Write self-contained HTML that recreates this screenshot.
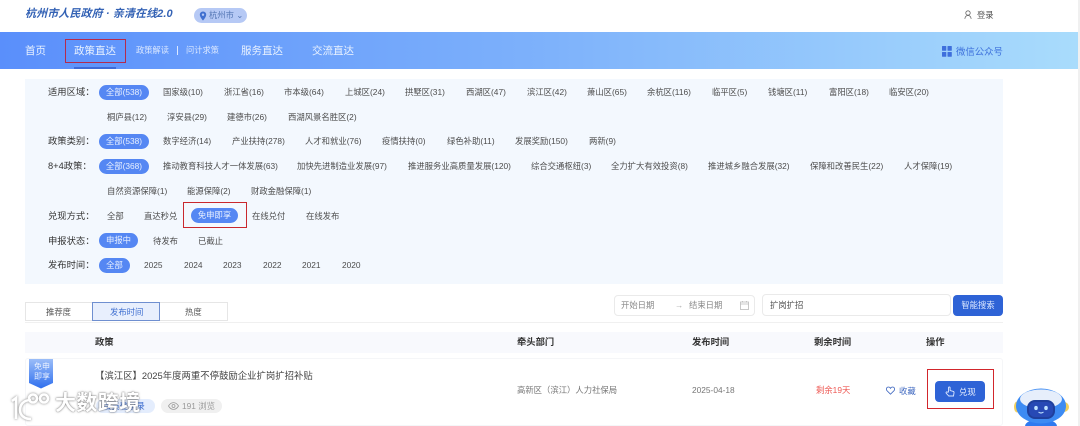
<!DOCTYPE html>
<html lang="zh"><head><meta charset="utf-8"><style>
html,body{margin:0;padding:0;width:1080px;height:426px;overflow:hidden;background:#fff}
body{position:relative;font-family:"Liberation Sans","Noto Sans CJK SC",sans-serif;color:#555}
#w{position:absolute;left:0;top:0;width:1080px;height:426px;overflow:hidden;filter:blur(.35px)}
.a{position:absolute;white-space:nowrap}
.t{position:absolute;white-space:nowrap;font-size:8.350px;line-height:14px;color:#4d4d4d}
.l{position:absolute;white-space:nowrap;font-size:9.300px;line-height:14px;color:#333;left:48px}
.p{position:absolute;white-space:nowrap;font-size:8.350px;line-height:15px;height:15px;background:#5587f3;color:#e8f0ff;border-radius:8px;text-align:center}
.n{position:absolute;white-space:nowrap;color:#e9f2ff;font-size:10.500px;line-height:16px;top:43px}
.h{position:absolute;white-space:nowrap;font-size:9.300px;line-height:14px;top:335px;color:#333;font-weight:700}
</style></head><body><div id="w">
<div class="a" style="left:25px;top:7px;font-size:11px;line-height:14px;font-weight:700;font-style:italic;color:#3563b5;letter-spacing:.1px">杭州市人民政府 · 亲清在线2.0</div>
<div class="a" style="left:194px;top:8px;width:53px;height:15px;border-radius:8px;background:#b6c9f5"></div>
<svg class="a" style="left:199px;top:11px" width="8" height="10" viewBox="0 0 8 10"><path d="M4 .5a3.2 3.2 0 0 0-3.2 3.2C.8 6 4 9.5 4 9.500S7.200 6 7.200 3.700A3.200 3.200 0 0 0 4 .5z" fill="#3f6fd0"/><circle cx="4" cy="3.700" r="1.200" fill="#b6c9f5"/></svg>
<div class="a" style="left:209px;top:8px;font-size:8.300px;line-height:14px;color:#5577b5">杭州市 ⌄</div>
<svg class="a" style="left:964px;top:10px" width="8" height="10" viewBox="0 0 8 10" fill="none" stroke="#666" stroke-width=".8"><circle cx="4" cy="3" r="2.200"/><path d="M.8 8.800C1.200 6.500 2.500 5.500 4 5.500s2.800 1 3.200 3.300"/></svg>
<div class="a" style="left:977px;top:8px;font-size:8.300px;line-height:14px;color:#555">登录</div>

<div class="a" style="left:0;top:32px;width:1078px;height:37px;background:linear-gradient(90deg,#5a8ffb 0%,#7db1fb 50%,#a9dcfc 100%)"></div>
<div class="a" style="left:1078px;top:0;width:2px;height:426px;background:#f0f0f0"></div>
<div class="n" style="left:25px">首页</div>
<div class="a" style="left:65px;top:39px;width:61px;height:24px;border:1.500px solid #b32b4e;box-sizing:border-box"></div>
<div class="n" style="left:74px">政策直达</div>
<div class="a" style="left:74px;top:67px;width:42px;height:2px;background:#3c6ad8"></div>
<div class="a" style="left:136px;top:44px;font-size:8.250px;line-height:14px;color:#dbe8ff">政策解读</div>
<div class="a" style="left:177px;top:46px;width:1px;height:9px;background:#dbe8ff"></div>
<div class="a" style="left:186px;top:44px;font-size:8.250px;line-height:14px;color:#dbe8ff">问计求策</div>
<div class="n" style="left:241px">服务直达</div>
<div class="n" style="left:312px">交流直达</div>
<svg class="a" style="left:942px;top:46px" width="10" height="11" viewBox="0 0 10 11" fill="#3e6fdc"><rect width="4.300" height="4.800" rx=".5"/><rect x="5.500" width="4.300" height="4.800" rx=".5"/><rect y="6" width="4.300" height="4.800" rx=".5"/><rect x="5.500" y="6" width="4.300" height="4.800" rx=".5"/></svg>
<div class="a" style="left:956px;top:45px;font-size:9.400px;line-height:14px;color:#3e72dc">微信公众号</div>

<div class="a" style="left:25px;top:79px;width:978px;height:205px;background:#f3f8fe"></div>

<div class="l" style="top:85px">适用区域：</div>
<div class="p" style="left:99px;top:85px;width:50px">全部(538)</div>
<div class="t" style="left:163px;top:85px">国家级(10)</div>
<div class="t" style="left:224px;top:85px">浙江省(16)</div>
<div class="t" style="left:284px;top:85px">市本级(64)</div>
<div class="t" style="left:345px;top:85px">上城区(24)</div>
<div class="t" style="left:405px;top:85px">拱墅区(31)</div>
<div class="t" style="left:466px;top:85px">西湖区(47)</div>
<div class="t" style="left:527px;top:85px">滨江区(42)</div>
<div class="t" style="left:587px;top:85px">萧山区(65)</div>
<div class="t" style="left:647px;top:85px">余杭区(116)</div>
<div class="t" style="left:712px;top:85px">临平区(5)</div>
<div class="t" style="left:768px;top:85px">钱塘区(11)</div>
<div class="t" style="left:829px;top:85px">富阳区(18)</div>
<div class="t" style="left:889px;top:85px">临安区(20)</div>

<div class="t" style="left:107px;top:110px">桐庐县(12)</div>
<div class="t" style="left:167px;top:110px">淳安县(29)</div>
<div class="t" style="left:227px;top:110px">建德市(26)</div>
<div class="t" style="left:288px;top:110px">西湖风景名胜区(2)</div>

<div class="l" style="top:134px">政策类别：</div>
<div class="p" style="left:99px;top:134px;width:50px">全部(538)</div>
<div class="t" style="left:163px;top:134px">数字经济(14)</div>
<div class="t" style="left:232px;top:134px">产业扶持(278)</div>
<div class="t" style="left:305px;top:134px">人才和就业(76)</div>
<div class="t" style="left:382px;top:134px">疫情扶持(0)</div>
<div class="t" style="left:447px;top:134px">绿色补助(11)</div>
<div class="t" style="left:515px;top:134px">发展奖励(150)</div>
<div class="t" style="left:589px;top:134px">两新(9)</div>

<div class="l" style="top:159px">8+4政策：</div>
<div class="p" style="left:99px;top:159px;width:50px">全部(368)</div>
<div class="t" style="left:163px;top:159px">推动教育科技人才一体发展(63)</div>
<div class="t" style="left:297px;top:159px">加快先进制造业发展(97)</div>
<div class="t" style="left:408px;top:159px">推进服务业高质量发展(120)</div>
<div class="t" style="left:531px;top:159px">综合交通枢纽(3)</div>
<div class="t" style="left:611px;top:159px">全力扩大有效投资(8)</div>
<div class="t" style="left:708px;top:159px">推进城乡融合发展(32)</div>
<div class="t" style="left:810px;top:159px">保障和改善民生(22)</div>
<div class="t" style="left:904px;top:159px">人才保障(19)</div>

<div class="t" style="left:107px;top:184px">自然资源保障(1)</div>
<div class="t" style="left:187px;top:184px">能源保障(2)</div>
<div class="t" style="left:251px;top:184px">财政金融保障(1)</div>

<div class="l" style="top:209px">兑现方式：</div>
<div class="t" style="left:107px;top:209px">全部</div>
<div class="t" style="left:144px;top:209px">直达秒兑</div>
<div class="a" style="left:183px;top:202px;width:64px;height:26px;border:1.500px solid #c9282d;box-sizing:border-box"></div>
<div class="p" style="left:191px;top:208px;width:47px">免申即享</div>
<div class="t" style="left:252px;top:209px">在线兑付</div>
<div class="t" style="left:306px;top:209px">在线发布</div>

<div class="l" style="top:234px">申报状态：</div>
<div class="p" style="left:99px;top:233px;width:39px">申报中</div>
<div class="t" style="left:153px;top:234px">待发布</div>
<div class="t" style="left:198px;top:234px">已截止</div>

<div class="l" style="top:258px">发布时间：</div>
<div class="p" style="left:99px;top:258px;width:31px">全部</div>
<div class="t" style="left:144px;top:258px">2025</div>
<div class="t" style="left:184px;top:258px">2024</div>
<div class="t" style="left:223px;top:258px">2023</div>
<div class="t" style="left:263px;top:258px">2022</div>
<div class="t" style="left:302px;top:258px">2021</div>
<div class="t" style="left:342px;top:258px">2020</div>

<div class="a" style="left:25px;top:302px;width:203px;height:19px;border:1px solid #e6e6e6;box-sizing:border-box"></div>
<div class="a" style="left:92px;top:302px;width:68px;height:19px;border:1px solid #6f8fd0;background:#e8effd;box-sizing:border-box"></div>
<div class="t" style="left:46px;top:305px;color:#555">推荐度</div>
<div class="t" style="left:110px;top:305px;color:#3f6fd0">发布时间</div>
<div class="t" style="left:185px;top:305px;color:#555">热度</div>

<div class="a" style="left:614px;top:295px;width:141px;height:21px;border:1px solid #eaeaea;border-radius:4px;box-sizing:border-box"></div>
<div class="t" style="left:621px;top:298px;color:#888">开始日期</div>
<div class="t" style="left:675px;top:298px;color:#aaa">→</div>
<div class="t" style="left:689px;top:298px;color:#888">结束日期</div>
<svg class="a" style="left:740px;top:301px" width="9" height="9" viewBox="0 0 9 9" fill="none" stroke="#bbb" stroke-width=".8"><rect x=".5" y="1" width="8" height="7.500"/><path d="M.5 3h8M2.500 0v1.500M6.500 0v1.500"/></svg>
<div class="a" style="left:762px;top:294px;width:189px;height:22px;border:1px solid #eaeaea;border-radius:4px;box-sizing:border-box"></div>
<div class="t" style="left:770px;top:298px;color:#555">扩岗扩招</div>
<div class="a" style="left:953px;top:295px;width:50px;height:21px;background:#2e63d6;border-radius:4px;color:#dbe7ff;font-size:8.350px;line-height:21px;text-align:center">智能搜索</div>
<div class="a" style="left:25px;top:322px;width:978px;height:1px;background:#f0f0f0"></div>

<div class="a" style="left:25px;top:332px;width:978px;height:21px;background:#f8f9fd"></div>
<div class="h" style="left:95px">政策</div>
<div class="h" style="left:517px">牵头部门</div>
<div class="h" style="left:692px">发布时间</div>
<div class="h" style="left:814px">剩余时间</div>
<div class="h" style="left:926px">操作</div>

<div class="a" style="left:25px;top:358px;width:978px;height:68px;border:1px solid #f5f6f8;border-radius:3px;box-sizing:border-box"></div>
<svg class="a" style="left:29px;top:359px" width="24" height="30" viewBox="0 0 24 30"><defs><linearGradient id="g" x1="0" y1="0" x2="0" y2="1"><stop offset="0" stop-color="#9bbdf8"/><stop offset="1" stop-color="#2f6fee"/></linearGradient></defs><path d="M0 0h24v24l-12 5.500L0 24z" fill="url(#g)"/></svg>
<div class="a" style="left:33px;top:362px;width:18px;font-size:8px;line-height:9.500px;color:#e8f0ff;text-align:center;white-space:normal">免申即享</div>
<div class="a" style="left:95px;top:368px;font-size:9.400px;line-height:15px;color:#444">【滨江区】2025年度两重不停鼓励企业扩岗扩招补贴</div>
<div class="a" style="left:96px;top:399px;width:59px;height:14px;background:#e4edfd;border-radius:7px"></div>
<div class="t" style="left:103px;top:399px;color:#3f6fd0">会员登录录</div>
<div class="a" style="left:161px;top:399px;width:61px;height:14px;background:#f0f0f0;border-radius:7px"></div>
<svg class="a" style="left:168px;top:402px" width="11" height="8" viewBox="0 0 11 8" fill="none" stroke="#999" stroke-width=".8"><path d="M.5 4C2 1.500 3.700.6 5.500.6S9 1.500 10.500 4C9 6.500 7.300 7.400 5.500 7.400S2 6.500.5 4z"/><circle cx="5.500" cy="4" r="1.500"/></svg>
<div class="t" style="left:182px;top:399px;color:#999">191 浏览</div>

<div class="t" style="left:517px;top:383px;color:#777">高新区（滨江）人力社保局</div>
<div class="t" style="left:692px;top:383px;color:#777">2025-04-18</div>
<div class="t" style="left:816px;top:383px;color:#ee5a55">剩余19天</div>
<svg class="a" style="left:886px;top:386px" width="9" height="9" viewBox="0 0 9 9" fill="none" stroke="#3f68c0" stroke-width=".8"><path d="M4.500 8.200L1 4.700C-.2 3.300.5 1 2.400 1c1 0 1.700.5 2.100 1.300C4.900 1.500 5.600 1 6.600 1c1.900 0 2.600 2.300 1.400 3.700z"/></svg>
<div class="t" style="left:899px;top:384px;color:#3f68c0">收藏</div>
<div class="a" style="left:927px;top:369px;width:67px;height:40px;border:1.500px solid #d2262c;box-sizing:border-box"></div>
<div class="a" style="left:935px;top:381px;width:50px;height:21px;background:#2e63d6;border-radius:4px"></div>
<svg class="a" style="left:945px;top:386px" width="10" height="11" viewBox="0 0 10 11" fill="none" stroke="#dbe7ff" stroke-width=".9"><path d="M3.500 6V1.800a.8.800 0 0 1 1.600 0V4.500l2.900.8c.8.200 1.200.8 1 1.600L8.500 10H3.800L1.200 7.200c-.6-.7.300-1.700 1.100-1.100z"/></svg>
<div class="t" style="left:959px;top:385px;color:#e8f0ff">兑现</div>

<svg class="a" style="left:1012px;top:386px" width="62" height="40" viewBox="0 0 62 40"><ellipse cx="29" cy="40" rx="16" ry="7" fill="#2f7af0"/><ellipse cx="5" cy="21" rx="3" ry="5.500" fill="#f1cf5c"/><circle cx="52" cy="21" r="5" fill="#f1cf5c"/><ellipse cx="29" cy="20" rx="25" ry="17.500" fill="#3d8bf3"/><ellipse cx="29" cy="13" rx="21" ry="9.500" fill="#e6eefb"/><rect x="15" y="14" width="28" height="19" rx="8" fill="#1f3f9c"/><rect x="17" y="16" width="24" height="15" rx="6" fill="#2749b5"/><ellipse cx="24" cy="22" rx="1.800" ry="2.100" fill="#bfe2ff"/><ellipse cx="34" cy="22" rx="1.800" ry="2.100" fill="#bfe2ff"/><path d="M26.500 26q2.500 2 5 0" stroke="#bfe2ff" stroke-width="1.100" fill="none"/></svg>

<svg class="a" style="left:8px;top:392px;filter:drop-shadow(0 0 1.200px rgba(70,70,70,.7))" width="44" height="30" viewBox="0 0 44 30" fill="none" stroke="#fff" stroke-width="2.600"><path d="M4 9L8 6V27"/><path d="M23 8C15 8 12 13 12 18s4 9 11 9"/><circle cx="25" cy="6.500" r="4"/><circle cx="36" cy="6.500" r="4"/></svg>
<div class="a" style="left:55px;top:391px;font-size:21px;line-height:26px;font-weight:700;color:#fff;letter-spacing:.4px;text-shadow:0 0 2px rgba(70,70,70,.7),0 0 1px rgba(70,70,70,.5)">大数跨境</div>
</div></body></html>
